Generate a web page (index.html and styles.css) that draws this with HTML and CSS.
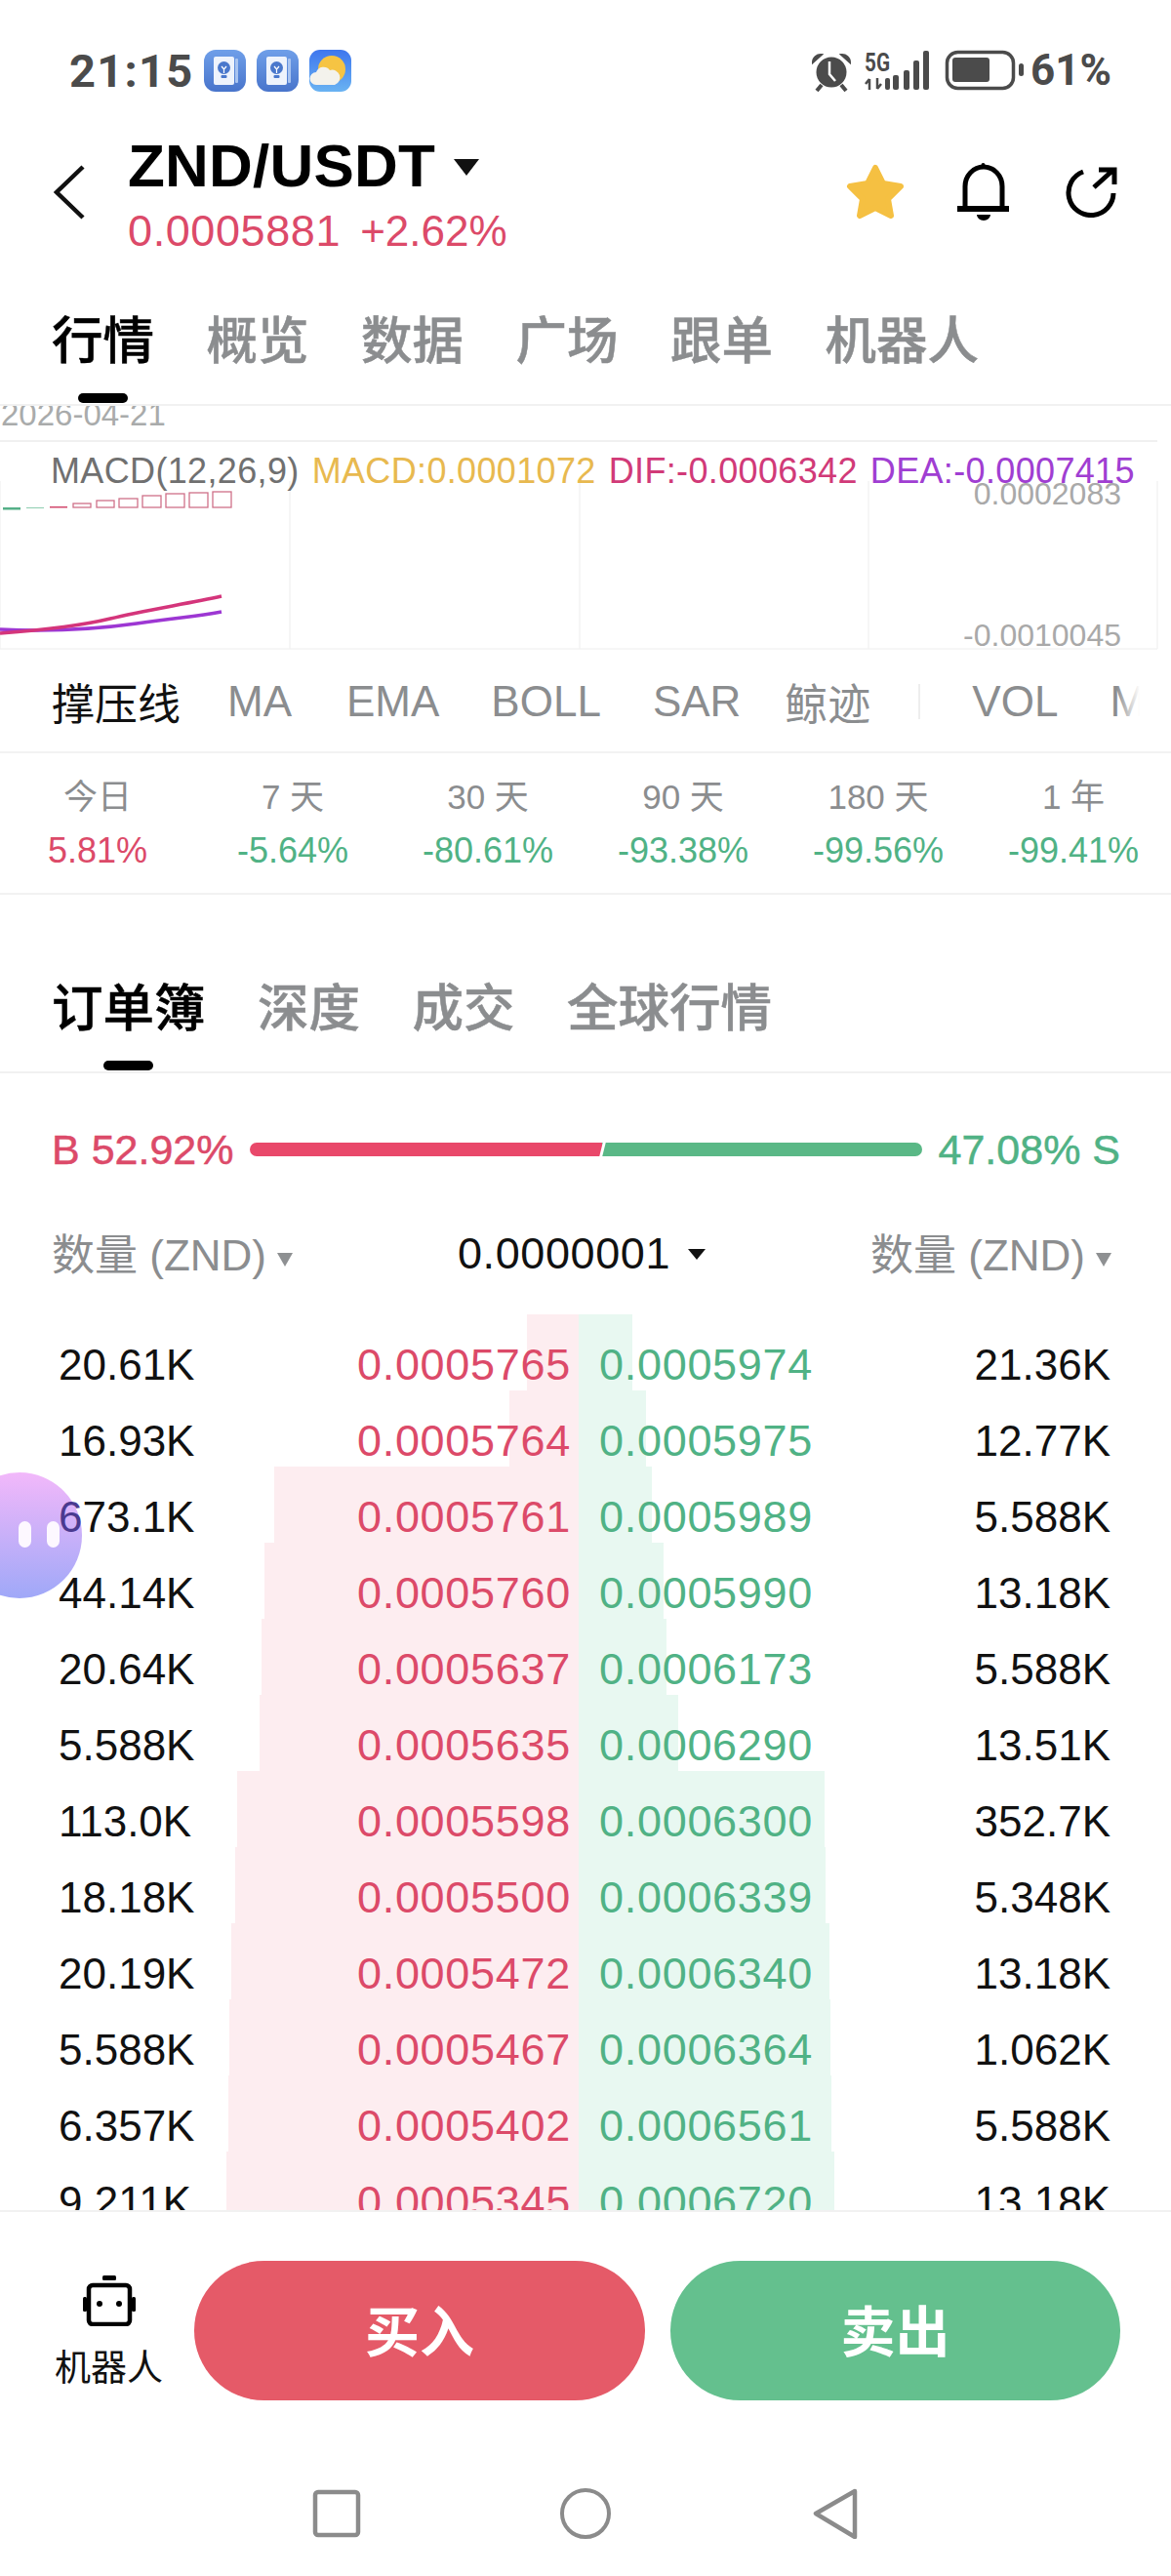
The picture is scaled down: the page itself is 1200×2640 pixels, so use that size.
FILE: index.html
```html
<!DOCTYPE html>
<html lang="zh">
<head>
    <meta charset="UTF-8">
    <meta name="viewport" content="width=device-width, initial-scale=1.0">
    <title>ZND/USDT</title>
    <link rel="stylesheet" href="styles.css">
</head>
<body>
    <svg class="defs" width="0" height="0">
        <defs>
            <linearGradient id="noteBg" x1="0" y1="0" x2="0" y2="1">
                <stop offset="0" stop-color="#6f9fe9"/>
                <stop offset="1" stop-color="#4874cb"/>
            </linearGradient>
            <linearGradient id="skyBg" x1="0" y1="0" x2="0" y2="1">
                <stop offset="0" stop-color="#3e76ee"/>
                <stop offset="1" stop-color="#69b3f2"/>
            </linearGradient>
            <symbol id="noteIcon" viewBox="0 0 43 43">
                <rect width="43" height="43" rx="12" fill="url(#noteBg)"/>
                <rect x="32" y="9" width="3" height="25" rx="1" fill="#a9c4f0"/>
                <rect x="10" y="7" width="21" height="29" rx="2" fill="#eef3fc"/>
                <circle cx="20.5" cy="18.5" r="6.5" fill="#4a78cc"/>
                <path d="M18 17l2.500 3 2.500-3M20.500 20v4" fill="none" stroke="#fff" stroke-width="1.200"/>
                <rect x="17.500" y="26" width="6" height="3" rx="1" fill="#4a78cc"/>
            </symbol>
        </defs>
    </svg>

    <!-- status bar -->
    <div class="status">
        <span class="time">21:15</span>
        <div class="status-apps">
            <svg width="43" height="43"><use href="#noteIcon"/></svg>
            <svg width="43" height="43"><use href="#noteIcon"/></svg>
            <svg width="43" height="43" viewBox="0 0 43 43">
                <rect width="43" height="43" rx="11" fill="url(#skyBg)"/>
                <circle cx="23" cy="20" r="14" fill="#f6c443"/>
                <path d="M7 36a6.500 6.500 0 0 1 0-13 8 8 0 0 1 14-2 7 7 0 0 1 5 15z" fill="#f3f2ec"/>
            </svg>
        </div>
        <div class="status-right">
            <svg class="status-icons" width="225" height="46" viewBox="0 0 225 46">
                <!-- alarm -->
                <circle cx="28" cy="25" r="15.500" fill="#4b4b4b"/>
                <path d="M9 15a8 8 0 0 1 9-8zM47 15a8 8 0 0 0-9-8z" fill="#4b4b4b" stroke="#4b4b4b" stroke-width="2"/>
                <path d="M18 38l-5 6M38 38l5 6" stroke="#4b4b4b" stroke-width="4"/>
                <path d="M26 14v13l6 7" fill="none" stroke="#fff" stroke-width="2.500"/>
                <!-- signal -->
                <text class="net" x="62" y="24" textLength="26" lengthAdjust="spacingAndGlyphs">5G</text>
                <path d="M67 32v11M63 37l4-5M75 31v11M79 37l-4 5" fill="none" stroke="#4b4b4b" stroke-width="2.500"/>
                <rect x="83" y="31" width="5" height="12" rx="2" fill="#4b4b4b"/>
                <rect x="91" y="28" width="6" height="15" rx="2" fill="#4b4b4b"/>
                <rect x="102" y="23" width="6" height="20" rx="2" fill="#4b4b4b"/>
                <rect x="112" y="13" width="6" height="30" rx="2" fill="#4b4b4b"/>
                <rect x="122" y="3" width="6" height="40" rx="2" fill="#4b4b4b"/>
                <!-- battery -->
                <rect x="146.500" y="4.500" width="68" height="37" rx="11" fill="none" stroke="#4b4b4b" stroke-width="3.500"/>
                <rect x="152" y="10" width="38" height="25" rx="3" fill="#4b4b4b"/>
                <rect x="220" y="16" width="5" height="13" rx="2.500" fill="#4b4b4b"/>
            </svg>
            <span class="battery-pct">61%</span>
        </div>
    </div>

    <!-- pair header -->
    <div class="header">
        <svg class="back" width="32" height="56" viewBox="0 0 32 56">
            <polyline points="30,2 3,28 30,54" fill="none" stroke="#111" stroke-width="4.500"/>
        </svg>
        <div class="pair">
            <div class="pair-name">ZND/USDT<i class="caret caret-big"></i></div>
            <div class="pair-price"><span class="pair-last">0.0005881</span><span class="pair-change">+2.62%</span></div>
        </div>
        <div class="actions">
            <svg width="60" height="58" viewBox="0 0 60 58">
                <polygon points="30,4 38,20 56,23 43,36 46,53 30,45 14,53 17,36 4,23 22,20" fill="#f5c042" stroke="#f5c042" stroke-width="6" stroke-linejoin="round"/>
            </svg>
            <svg width="54" height="60" viewBox="0 0 54 60">
                <rect x="24.500" y="0" width="4" height="6" rx="2" fill="#000"/>
                <path d="M8 46V24a19 20 0 0 1 38 0v22" fill="none" stroke="#000" stroke-width="5"/>
                <rect x="0" y="44" width="53" height="6" fill="#000"/>
                <path d="M20 53h14a7 6 0 0 1-14 0z" fill="#000"/>
            </svg>
            <svg class="share" width="54" height="52" viewBox="0 0 54 52">
                <path d="M18 5A23 23 0 1 0 49 27" fill="none" stroke="#000" stroke-width="5"/>
                <path d="M29 21L49 3M34 3h16v15" fill="none" stroke="#000" stroke-width="5"/>
            </svg>
        </div>
    </div>

    <div class="tabs">
        <span class="tab active">行情</span>
        <span class="tab">概览</span>
        <span class="tab">数据</span>
        <span class="tab">广场</span>
        <span class="tab">跟单</span>
        <span class="tab">机器人</span>
    </div>

    <!-- chart remainder -->
    <div class="date-row"><span>2026-04-21</span></div>
    <div class="chart">
        <svg class="chart-lines" width="1200" height="214" viewBox="0 453 1200 214">
            <path d="M297 493V665M594 493V665M890 493V665M1186 493V665M0 493V665M0 665H1186" stroke="#f3f3f3" stroke-width="1.500" fill="none"/>
            <rect x="3" y="520" width="18" height="2.500" fill="#55b088"/>
            <rect x="27" y="520" width="18" height="1" fill="#8fcdb0"/>
            <rect x="51" y="519" width="18" height="1.500" fill="#d2486c"/>
            <g fill="none" stroke="#cf7089" stroke-width="1.300">
                <rect x="75" y="516" width="18" height="4"/>
                <rect x="99" y="513" width="18" height="7"/>
                <rect x="122" y="511" width="19" height="9"/>
                <rect x="146" y="508" width="19" height="12"/>
                <rect x="170" y="506" width="19" height="14"/>
                <rect x="194" y="505" width="19" height="15"/>
                <rect x="218" y="504" width="19" height="16"/>
            </g>
            <path d="M0 645C40 647 90 646 140 639S200 632 227 627" fill="none" stroke="#9d37d3" stroke-width="3.500"/>
            <path d="M0 649C40 646 80 642 113 634S190 619 227 611" fill="none" stroke="#d4357b" stroke-width="3.500"/>
        </svg>
        <div class="legend">
            <span class="legend-grey">MACD(12,26,9)</span>
            <span class="legend-gold">MACD:0.0001072</span>
            <span class="legend-pink">DIF:-0.0006342</span>
            <span class="legend-purple">DEA:-0.0007415</span>
        </div>
        <span class="axis axis-top">0.0002083</span>
        <span class="axis axis-bottom">-0.0010045</span>
    </div>

    <div class="indicators">
        <span class="ind active">撑压线</span>
        <span class="ind ind-ma">MA</span>
        <span class="ind">EMA</span>
        <span class="ind">BOLL</span>
        <span class="ind">SAR</span>
        <span class="ind ind-whale">鲸迹</span>
        <span class="ind-sep"></span>
        <span class="ind">VOL</span>
        <span class="ind">MACD</span>
    </div>

    <div class="returns">
        <div><p>今日</p><b class="up">5.81%</b></div>
        <div><p>7 天</p><b class="down">-5.64%</b></div>
        <div><p>30 天</p><b class="down">-80.61%</b></div>
        <div><p>90 天</p><b class="down">-93.38%</b></div>
        <div><p>180 天</p><b class="down">-99.56%</b></div>
        <div><p>1 年</p><b class="down">-99.41%</b></div>
    </div>

    <div class="tabs tabs-book">
        <span class="tab active">订单簿</span>
        <span class="tab">深度</span>
        <span class="tab">成交</span>
        <span class="tab">全球行情</span>
    </div>

    <div class="ratio">
        <span class="up">B 52.92%</span>
        <div class="ratio-bar"><i class="ratio-buy"></i><i class="ratio-sell"></i></div>
        <span class="down">47.08% S</span>
    </div>

    <div class="book-head">
        <span class="book-col">数量 (ZND)<i class="caret caret-grey"></i></span>
        <span class="book-step">0.0000001<i class="caret caret-small"></i></span>
        <span class="book-col">数量 (ZND)<i class="caret caret-grey"></i></span>
    </div>

    <div class="book">
        <div class="row">
            <div class="side buy"><i class="bar" style="width:53px"></i><span class="qty">20.61K</span><span class="price">0.0005765</span></div>
            <div class="side sell"><i class="bar" style="width:55px"></i><span class="price">0.0005974</span><span class="qty">21.36K</span></div>
        </div>
        <div class="row">
            <div class="side buy"><i class="bar" style="width:71px"></i><span class="qty">16.93K</span><span class="price">0.0005764</span></div>
            <div class="side sell"><i class="bar" style="width:69px"></i><span class="price">0.0005975</span><span class="qty">12.77K</span></div>
        </div>
        <div class="row">
            <div class="side buy"><i class="bar" style="width:312px"></i><span class="qty"><span class="under-bubble">6</span>73.1K</span><span class="price">0.0005761</span></div>
            <div class="side sell"><i class="bar" style="width:75px"></i><span class="price">0.0005989</span><span class="qty">5.588K</span></div>
        </div>
        <div class="row">
            <div class="side buy"><i class="bar" style="width:322px"></i><span class="qty">44.14K</span><span class="price">0.0005760</span></div>
            <div class="side sell"><i class="bar" style="width:87px"></i><span class="price">0.0005990</span><span class="qty">13.18K</span></div>
        </div>
        <div class="row">
            <div class="side buy"><i class="bar" style="width:325px"></i><span class="qty">20.64K</span><span class="price">0.0005637</span></div>
            <div class="side sell"><i class="bar" style="width:90px"></i><span class="price">0.0006173</span><span class="qty">5.588K</span></div>
        </div>
        <div class="row">
            <div class="side buy"><i class="bar" style="width:327px"></i><span class="qty">5.588K</span><span class="price">0.0005635</span></div>
            <div class="side sell"><i class="bar" style="width:102px"></i><span class="price">0.0006290</span><span class="qty">13.51K</span></div>
        </div>
        <div class="row">
            <div class="side buy"><i class="bar" style="width:350px"></i><span class="qty">113.0K</span><span class="price">0.0005598</span></div>
            <div class="side sell"><i class="bar" style="width:252px"></i><span class="price">0.0006300</span><span class="qty">352.7K</span></div>
        </div>
        <div class="row">
            <div class="side buy"><i class="bar" style="width:352px"></i><span class="qty">18.18K</span><span class="price">0.0005500</span></div>
            <div class="side sell"><i class="bar" style="width:253px"></i><span class="price">0.0006339</span><span class="qty">5.348K</span></div>
        </div>
        <div class="row">
            <div class="side buy"><i class="bar" style="width:356px"></i><span class="qty">20.19K</span><span class="price">0.0005472</span></div>
            <div class="side sell"><i class="bar" style="width:257px"></i><span class="price">0.0006340</span><span class="qty">13.18K</span></div>
        </div>
        <div class="row">
            <div class="side buy"><i class="bar" style="width:358px"></i><span class="qty">5.588K</span><span class="price">0.0005467</span></div>
            <div class="side sell"><i class="bar" style="width:258px"></i><span class="price">0.0006364</span><span class="qty">1.062K</span></div>
        </div>
        <div class="row">
            <div class="side buy"><i class="bar" style="width:359px"></i><span class="qty">6.357K</span><span class="price">0.0005402</span></div>
            <div class="side sell"><i class="bar" style="width:259px"></i><span class="price">0.0006561</span><span class="qty">5.588K</span></div>
        </div>
        <div class="row">
            <div class="side buy"><i class="bar" style="width:361px"></i><span class="qty">9.211K</span><span class="price">0.0005345</span></div>
            <div class="side sell"><i class="bar" style="width:262px"></i><span class="price">0.0006720</span><span class="qty">13.18K</span></div>
        </div>
    </div>

    <!-- floating assistant -->
    <div class="bubble"><i></i><i></i></div>

    <div class="footer">
        <div class="robot">
            <svg width="56" height="52" viewBox="0 0 56 52">
                <rect x="21" y="0" width="14" height="5" rx="1.500" fill="#000"/>
                <rect x="7" y="10" width="42" height="40" rx="4" fill="none" stroke="#000" stroke-width="4.500"/>
                <rect x="1" y="22" width="4" height="15" rx="1.500" fill="#000"/>
                <rect x="51" y="22" width="4" height="15" rx="1.500" fill="#000"/>
                <circle cx="18" cy="29" r="3" fill="#000"/>
                <circle cx="38" cy="29" r="3" fill="#000"/>
            </svg>
            <span>机器人</span>
        </div>
        <div class="trade trade-buy">买入</div>
        <div class="trade trade-sell">卖出</div>
    </div>

    <div class="nav">
        <svg width="52" height="52" viewBox="0 0 52 52">
            <rect x="4" y="4" width="44" height="44" rx="3" fill="none" stroke="#8b8b8b" stroke-width="4.500"/>
        </svg>
        <svg width="52" height="52" viewBox="0 0 52 52">
            <circle cx="26" cy="26" r="24" fill="none" stroke="#8b8b8b" stroke-width="4"/>
        </svg>
        <svg width="52" height="52" viewBox="0 0 52 52">
            <polygon points="47,3 7,26 47,50" fill="none" stroke="#8b8b8b" stroke-width="4.500" stroke-linejoin="round"/>
        </svg>
    </div>
</body>
</html>
```

FILE: styles.css
```css
* {
    box-sizing: border-box;
}
body {
    margin: 0;
    width: 1200px;
    height: 2640px;
    overflow: hidden;
    position: relative;
    background-color: #fff;
    color: #111;
    font-family: "Liberation Sans", "Noto Sans CJK SC", sans-serif;
}
p {
    margin: 0;
}
.defs {
    position: absolute;
}
.up {
    color: #dc4a69;
}
.down {
    color: #50b285;
}

/* status bar */
.status {
    height: 144px;
    padding: 0 61px 0 71px;
    display: flex;
    align-items: center;
    color: #4b4b4b;
    font-family: Roboto, sans-serif;
    font-weight: 700;
}
.time {
    font-size: 47px;
    letter-spacing: 1.3px;
}
.status-apps {
    display: flex;
    gap: 11px;
    margin-left: 10px;
}
.status-right {
    margin-left: auto;
    display: flex;
    align-items: center;
    gap: 7px;
}
.net {
    font-size: 25px;
    fill: #4b4b4b;
    font-weight: 700;
}
.battery-pct {
    font-size: 44px;
}

/* pair header */
.header {
    height: 136px;
    padding-left: 55px;
    padding-right: 54px;
    display: flex;
    align-items: flex-start;
}
.back {
    margin-top: 25px;
    margin-right: 44px;
}
.pair-name {
    font-size: 62px;
    line-height: 52px;
    font-weight: 700;
    letter-spacing: 0.2px;
    color: #000;
    display: flex;
    align-items: center;
}
.pair-price {
    margin-top: 16px;
    font-size: 45px;
    line-height: 50px;
    color: #dc4a69;
    white-space: nowrap;
}
.pair-last {
    letter-spacing: 0.6px;
}
.pair-change {
    margin-left: 20px;
    font-size: 44px;
}
.actions {
    margin-left: auto;
    margin-top: 23px;
    display: flex;
    align-items: center;
    gap: 54px;
}
.share {
    margin-left: 3px;
}
.caret {
    display: inline-block;
    width: 0;
    height: 0;
    border-style: solid;
    border-color: #111 transparent transparent;
}
.caret-big {
    margin-left: 19px;
    margin-top: 2px;
    border-width: 17px 13px 0;
}
.caret-small {
    margin-left: 18px;
    border-width: 11px 9px 0;
    vertical-align: 9px;
}
.caret-grey {
    margin-left: 11px;
    border-width: 14px 8px 0;
    border-top-color: #8e9092;
    vertical-align: 4px;
}

/* tabs */
.tabs {
    height: 136px;
    padding-left: 53px;
    padding-top: 5px;
    display: flex;
    align-items: center;
    gap: 53.5px;
    border-bottom: 2px solid #f1f1f1;
}
.tabs-book {
    margin-top: 47px;
}
.tab {
    position: relative;
    font-size: 52.5px;
    line-height: 60px;
    font-weight: 500;
    color: #8b8d8f;
    -webkit-text-stroke: 0.5px;
}
.tab.active {
    color: #000;
}
.tab.active::after {
    content: "";
    position: absolute;
    left: 50%;
    bottom: -33px;
    width: 51px;
    height: 10px;
    margin-left: -26px;
    border-radius: 5px;
    background-color: #000;
}

/* chart */
.date-row {
    height: 37px;
    overflow: hidden;
    border-bottom: 2px solid #f0f0f0;
    width: 1186px;
    padding-left: 1px;
    font-size: 33px;
    line-height: 18px;
    color: #a9abab;
}
.chart {
    position: relative;
    height: 214px;
}
.chart-lines {
    position: absolute;
    left: 0;
    top: 0;
}
.legend {
    position: relative;
    padding: 12px 0 0 52px;
    display: flex;
    gap: 13px;
    font-size: 36px;
    line-height: 36px;
    letter-spacing: 0.35px;
    white-space: nowrap;
}
.legend-grey {
    color: #707070;
}
.legend-gold {
    color: #e8b94f;
}
.legend-pink {
    color: #d13a78;
}
.legend-purple {
    color: #a03ed2;
}
.axis {
    position: absolute;
    right: 51px;
    font-size: 32px;
    line-height: 32px;
    color: #a9a9a9;
}
.axis-top {
    top: 37px;
}
.axis-bottom {
    top: 182px;
}

/* indicator strip */
.indicators {
    position: relative;
    height: 103px;
    width: 1168px;
    padding-left: 53px;
    display: flex;
    align-items: center;
    gap: 53px;
    overflow: hidden;
    font-size: 44px;
    color: #8b8d8f;
    white-space: nowrap;
}
.indicators::after {
    content: "";
    position: absolute;
    right: 0;
    top: 0;
    bottom: 0;
    width: 24px;
    background: linear-gradient(to right, rgba(255, 255, 255, 0), #fff);
}
.ind.active {
    color: #111;
    margin-right: -5px;
}
.ind-ma {
    margin-right: 3px;
}
.ind-whale {
    margin-left: -8px;
}
.ind-sep {
    flex: none;
    width: 2px;
    height: 36px;
    margin-left: -4px;
    background-color: #eee;
}

/* period returns */
.returns {
    height: 147px;
    padding-top: 27px;
    display: grid;
    grid-template-columns: repeat(6, 200px);
    text-align: center;
    border-top: 2px solid #f2f2f2;
    border-bottom: 2px solid #f2f2f2;
}
.returns p {
    font-size: 35px;
    line-height: 36px;
    color: #8b8d8f;
}
.returns b {
    display: block;
    margin-top: 19px;
    font-size: 36px;
    line-height: 36px;
    font-weight: 400;
}

/* buy / sell ratio */
.ratio {
    height: 156px;
    padding: 0 52px 0 53px;
    display: flex;
    align-items: center;
    gap: 17px;
    font-size: 43px;
    -webkit-text-stroke: 0.5px;
}
.ratio-bar {
    flex: 1;
    height: 14px;
    position: relative;
    display: flex;
    border-radius: 7px;
    overflow: hidden;
}
.ratio-bar::after {
    content: "";
    position: absolute;
    left: 360px;
    top: -2px;
    bottom: -2px;
    width: 3px;
    background-color: #fff;
    transform: skewX(-14deg);
}
.ratio-buy {
    width: 361px;
    background-color: #e9486a;
}
.ratio-sell {
    flex: 1;
    background-color: #5ab886;
}

/* order book */
.book-head {
    height: 91px;
    padding: 0 61px 0 53px;
    display: flex;
    justify-content: space-between;
    line-height: 62px;
    white-space: nowrap;
}
.book-col {
    font-size: 44px;
    color: #8b8d8f;
}
.book-step {
    font-size: 45px;
    line-height: 58px;
    letter-spacing: 0.6px;
    color: #111;
}
.book {
    height: 918px;
    overflow: hidden;
}
.row {
    height: 78px;
    display: flex;
}
.side {
    position: relative;
    display: flex;
    justify-content: space-between;
    padding-top: 26px;
    font-size: 44px;
    line-height: 52px;
}
.side.buy {
    width: 593px;
    padding-left: 60px;
    padding-right: 8px;
}
.side.sell {
    width: 607px;
    padding-left: 21px;
    padding-right: 62px;
}
.bar {
    position: absolute;
    top: 0;
    bottom: 0;
}
.buy .bar {
    right: 0;
    background-color: #fdedf0;
}
.sell .bar {
    left: 0;
    background-color: #e8f8f1;
}
.qty,
.price {
    position: relative;
    z-index: 1;
}
.qty {
    color: #111;
}
.price {
    font-size: 45px;
    letter-spacing: 0.7px;
}
.buy .price {
    color: #dc4a69;
}
.sell .price {
    color: #50b285;
}
.under-bubble {
    color: #4a3a90;
}
.bubble {
    position: absolute;
    z-index: 0;
    left: -44px;
    top: 1509px;
    width: 128px;
    height: 129px;
    border-radius: 50%;
    background: linear-gradient(to bottom, #f2b8fa, #9fa8f8);
}
.bubble i {
    position: absolute;
    top: 50px;
    width: 13px;
    height: 27px;
    border-radius: 7px;
    background-color: #fdf8ff;
}
.bubble i:first-child {
    left: 63px;
}
.bubble i:last-child {
    left: 92px;
}

/* bottom actions */
.footer {
    position: relative;
    z-index: 2;
    height: 235px;
    padding: 50px 52px 0 50px;
    display: flex;
    align-items: flex-start;
    gap: 26px;
    background-color: #fff;
    border-top: 2px solid #f1f1f1;
}
.robot {
    width: 123px;
    padding-top: 15px;
    display: flex;
    flex-direction: column;
    align-items: center;
    font-size: 37px;
    line-height: 36px;
}
.robot span {
    margin-top: 26px;
    white-space: nowrap;
}
.trade {
    width: 461px;
    height: 143px;
    padding-bottom: 6px;
    border-radius: 72px;
    display: flex;
    align-items: center;
    justify-content: center;
    color: #fff;
    font-size: 56px;
    font-weight: 700;
}
.trade-buy {
    width: 462px;
    background-color: #e55a68;
}
.trade-sell {
    background-color: #64c08e;
}
.nav {
    height: 140px;
    padding-top: 50px;
    display: flex;
    justify-content: center;
    gap: 203px;
}
```
